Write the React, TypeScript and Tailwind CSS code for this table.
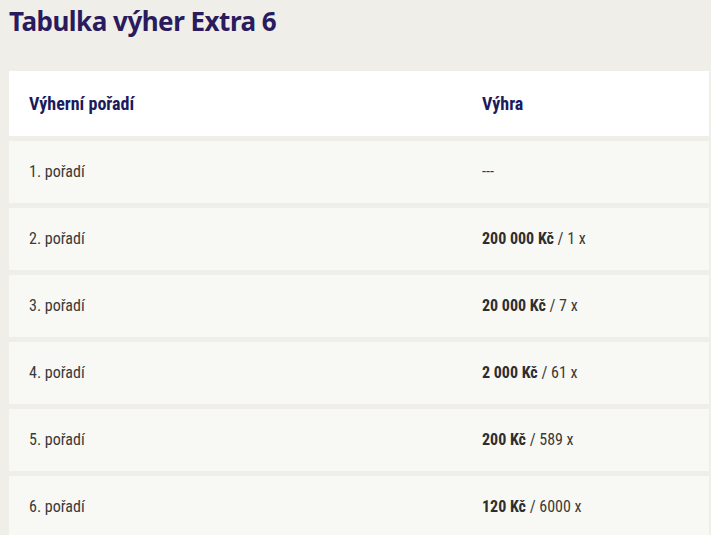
import React from "react";

const rows: { rank: string; amount?: string; count?: string }[] = [
  { rank: "1. pořadí" },
  { rank: "2. pořadí", amount: "200 000 Kč", count: "1 x" },
  { rank: "3. pořadí", amount: "20 000 Kč", count: "7 x" },
  { rank: "4. pořadí", amount: "2 000 Kč", count: "61 x" },
  { rank: "5. pořadí", amount: "200 Kč", count: "589 x" },
  { rank: "6. pořadí", amount: "120 Kč", count: "6000 x" },
];

const cond = "font-['Roboto_Condensed','Liberation_Sans_Narrow','DejaVu_Sans_Condensed',Roboto,sans-serif]";

export default function App() {
  return (
    <div className="min-h-[535px] bg-[#efeee8] pl-[9px] pr-[2px] pt-[4px] overflow-hidden">
      <h1 className="font-['Noto_Sans',sans-serif] text-[26px] font-bold leading-[34px] text-[#2a1b5e] tracking-[-0.5px]">
        Tabulka výher Extra 6
      </h1>
      <div className={`mt-[33px] flex flex-col gap-[5px] ${cond}`}>
        <div className="flex h-[65px] items-center bg-white text-[18px] font-bold text-[#1b1a5c]">
          <div className="w-[453px] pl-[20px]">Výherní pořadí</div>
          <div className="pl-[20px]">Výhra</div>
        </div>
        {rows.map((r) => (
          <div key={r.rank} className="flex h-[62px] items-center bg-[#f8f8f4] text-[16px] text-[#3a3a3a]">
            <div className="w-[453px] pl-[20px]">{r.rank}</div>
            <div className="pl-[20px]">
              {r.amount ? (
                <>
                  <span className="font-bold text-[#2e2e2e]">{r.amount}</span> / {r.count}
                </>
              ) : (
                "---"
              )}
            </div>
          </div>
        ))}
      </div>
    </div>
  );
}
